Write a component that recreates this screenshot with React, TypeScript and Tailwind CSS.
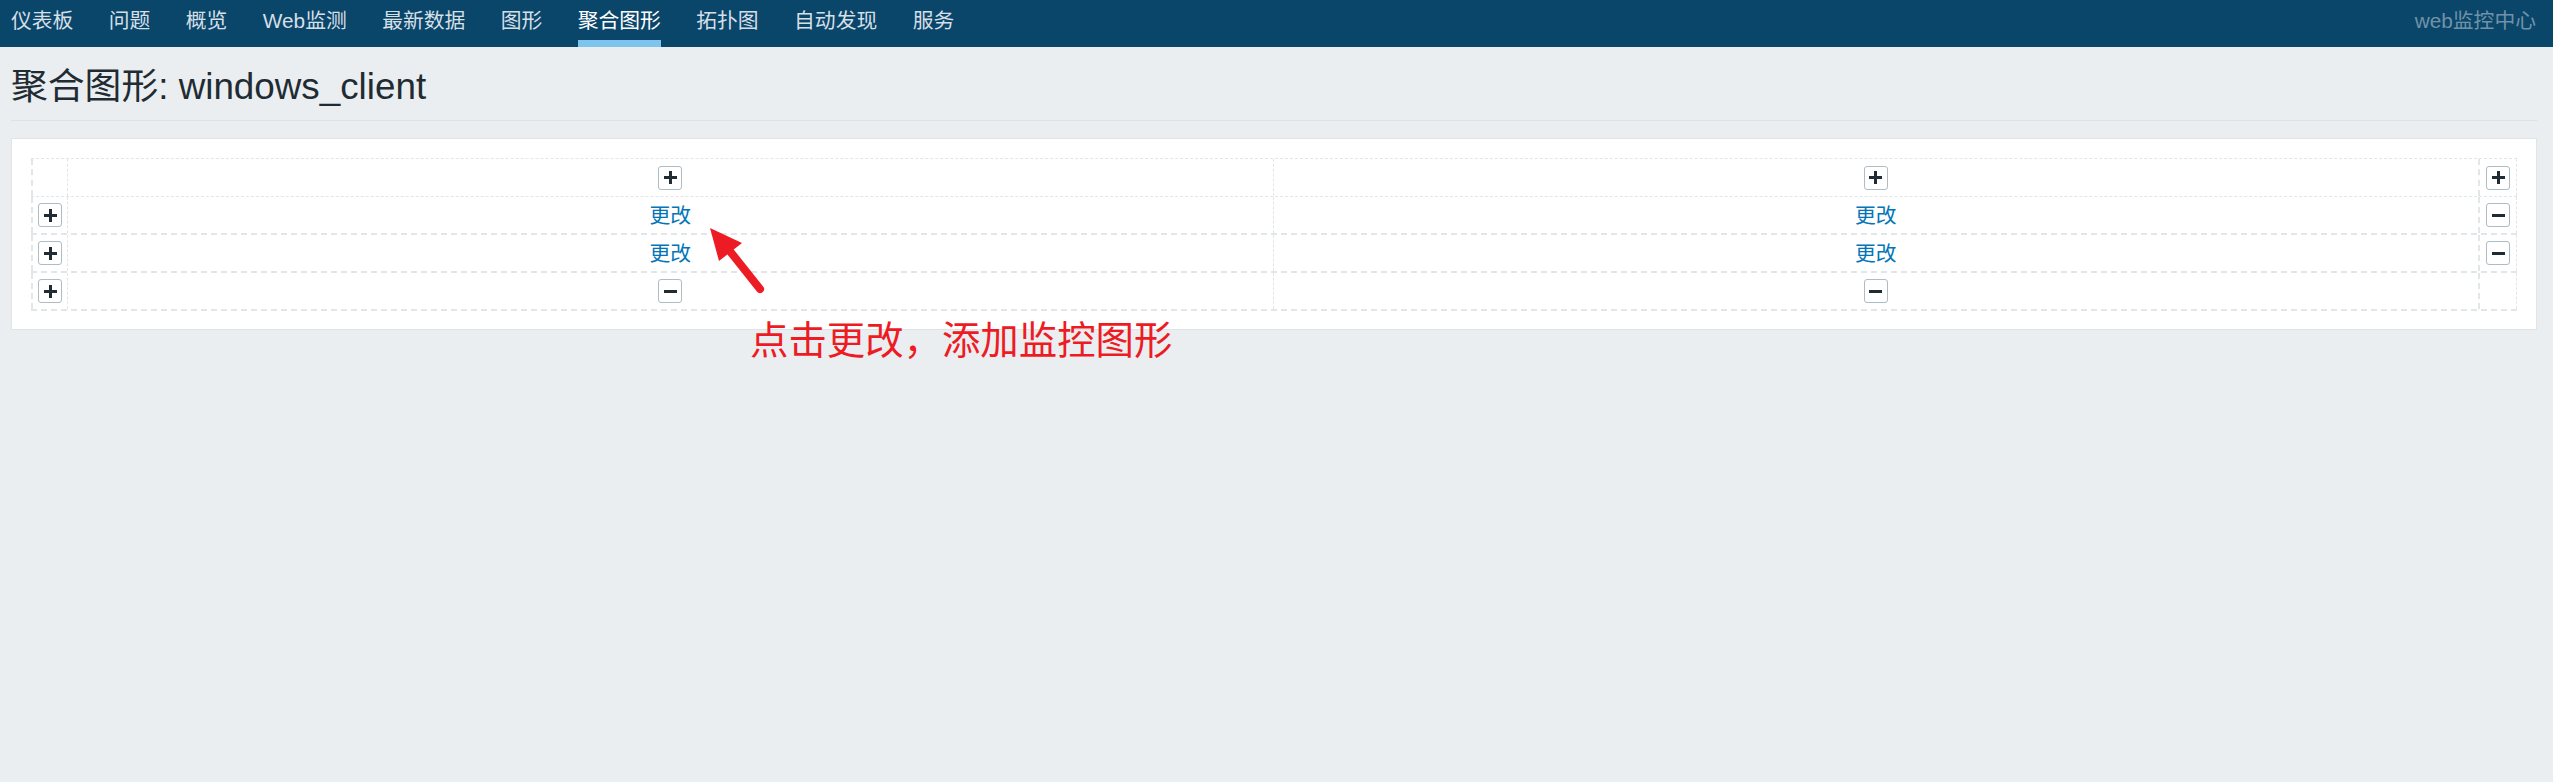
import React from "react";

const FONT = '"Liberation Sans", Arial, "Noto Sans CJK SC", sans-serif';

function PlusIcon() {
  return (
    <svg width="13" height="13" viewBox="0 0 13 13">
      <rect x="0" y="5" width="13" height="3" fill="#1f2c33" />
      <rect x="5" y="0" width="3" height="13" fill="#1f2c33" />
    </svg>
  );
}

function MinusIcon() {
  return (
    <svg width="13" height="13" viewBox="0 0 13 13">
      <rect x="0" y="5" width="13" height="3" fill="#1f2c33" />
    </svg>
  );
}

function IconButton({ kind }: { kind: "plus" | "minus" }) {
  return (
    <button className="w-[24px] h-[24px] flex items-center justify-center bg-white border border-[#aebcc4] rounded-[3px]">
      {kind === "plus" ? <PlusIcon /> : <MinusIcon />}
    </button>
  );
}

type CellContent = "plus" | "minus" | "edit" | null;

function Content({ c }: { c: CellContent }) {
  if (c === "plus" || c === "minus") return <IconButton kind={c} />;
  if (c === "edit")
    return (
      <a className="text-[20.8px] leading-[21px] text-[#0275b8] cursor-pointer">更改</a>
    );
  return null;
}

function Row({
  cells,
  bottom,
  top,
}: {
  cells: CellContent[];
  bottom: "thin" | "thick";
  top?: boolean;
}) {
  const rowCls =
    (bottom === "thin"
      ? "border-b border-dashed border-[#e1e6e9] "
      : "border-b-2 border-dashed border-[#e1e6e9] ") +
    (top ? "border-t border-t-[#e1e6e9] h-[39px] " : "h-[38px] ");
  return (
    <div className={"flex " + rowCls}>
      <div className="w-[37px] shrink-0 flex items-center justify-center border-l-2 border-r border-dashed border-[#e1e6e9]">
        <Content c={cells[0]} />
      </div>
      <div className="flex-1 basis-0 flex items-center justify-center border-r border-dashed border-[#e1e6e9]">
        <Content c={cells[1]} />
      </div>
      <div className="flex-1 basis-0 flex items-center justify-center border-r-2 border-dashed border-[#e1e6e9]">
        <Content c={cells[2]} />
      </div>
      <div className="w-[37px] shrink-0 flex items-center justify-center border-r border-dashed border-[#e1e6e9]">
        <Content c={cells[3]} />
      </div>
    </div>
  );
}

const NAV = ["仪表板", "问题", "概览", "Web监测", "最新数据", "图形", "聚合图形", "拓扑图", "自动发现", "服务"];

export default function App() {
  return (
    <div
      className="relative min-h-screen w-full bg-[#ebeef0] overflow-hidden"
      style={{ fontFamily: FONT }}
    >
      <nav className="h-[47px] bg-[#0a466a] flex items-start justify-between pl-[11px] pr-[17px]">
        <ul className="flex gap-[35.4px]">
          {NAV.map((n) => {
            const active = n === "聚合图形";
            return (
              <li
                key={n}
                className={
                  "relative h-[47px] pt-[10px] text-[20.8px] leading-[21px] whitespace-nowrap " +
                  (active ? "text-white" : "text-[#d5dfe6]")
                }
              >
                {n}
                {active && (
                  <span className="absolute left-0 right-0 bottom-0 h-[7px] bg-[#7fc4ef]" />
                )}
              </li>
            );
          })}
        </ul>
        <div className="pt-[10px] text-[20.8px] leading-[21px] text-[#7092a8] whitespace-nowrap">
          web监控中心
        </div>
      </nav>

      <div className="ml-[11px] mr-[16px]">
        <header className="pt-[22px] pb-[15px] border-b border-[#dde2e5]">
          <h1 className="text-[36.8px] leading-[36px] text-[#1f2c33] whitespace-nowrap">
            聚合图形: windows_client
          </h1>
        </header>

        <section className="mt-[17px] bg-white border border-[#dfe4e7] px-[19px] pt-[19px] pb-[18px]">
          <Row top bottom="thin" cells={[null, "plus", "plus", "plus"]} />
          <Row bottom="thick" cells={["plus", "edit", "edit", "minus"]} />
          <Row bottom="thick" cells={["plus", "edit", "edit", "minus"]} />
          <Row bottom="thick" cells={["plus", "minus", "minus", null]} />
        </section>
      </div>

      {/* annotation arrow */}
      <svg
        className="absolute left-0 top-0 pointer-events-none"
        width="2553"
        height="782"
        viewBox="0 0 2553 782"
      >
        <line
          x1="729"
          y1="250"
          x2="760"
          y2="289"
          stroke="#ed1c24"
          strokeWidth="8"
          strokeLinecap="round"
        />
        <polygon points="710,228 719,261 742,243" fill="#ed1c24" />
      </svg>
      <div
        className="absolute left-[750px] top-[318px] text-[38.4px] leading-[38px] text-[#ed1c24] whitespace-nowrap"
        style={{ fontFamily: '"Noto Sans CJK SC", sans-serif' }}
      >
        点击更改，添加监控图形
      </div>
    </div>
  );
}
